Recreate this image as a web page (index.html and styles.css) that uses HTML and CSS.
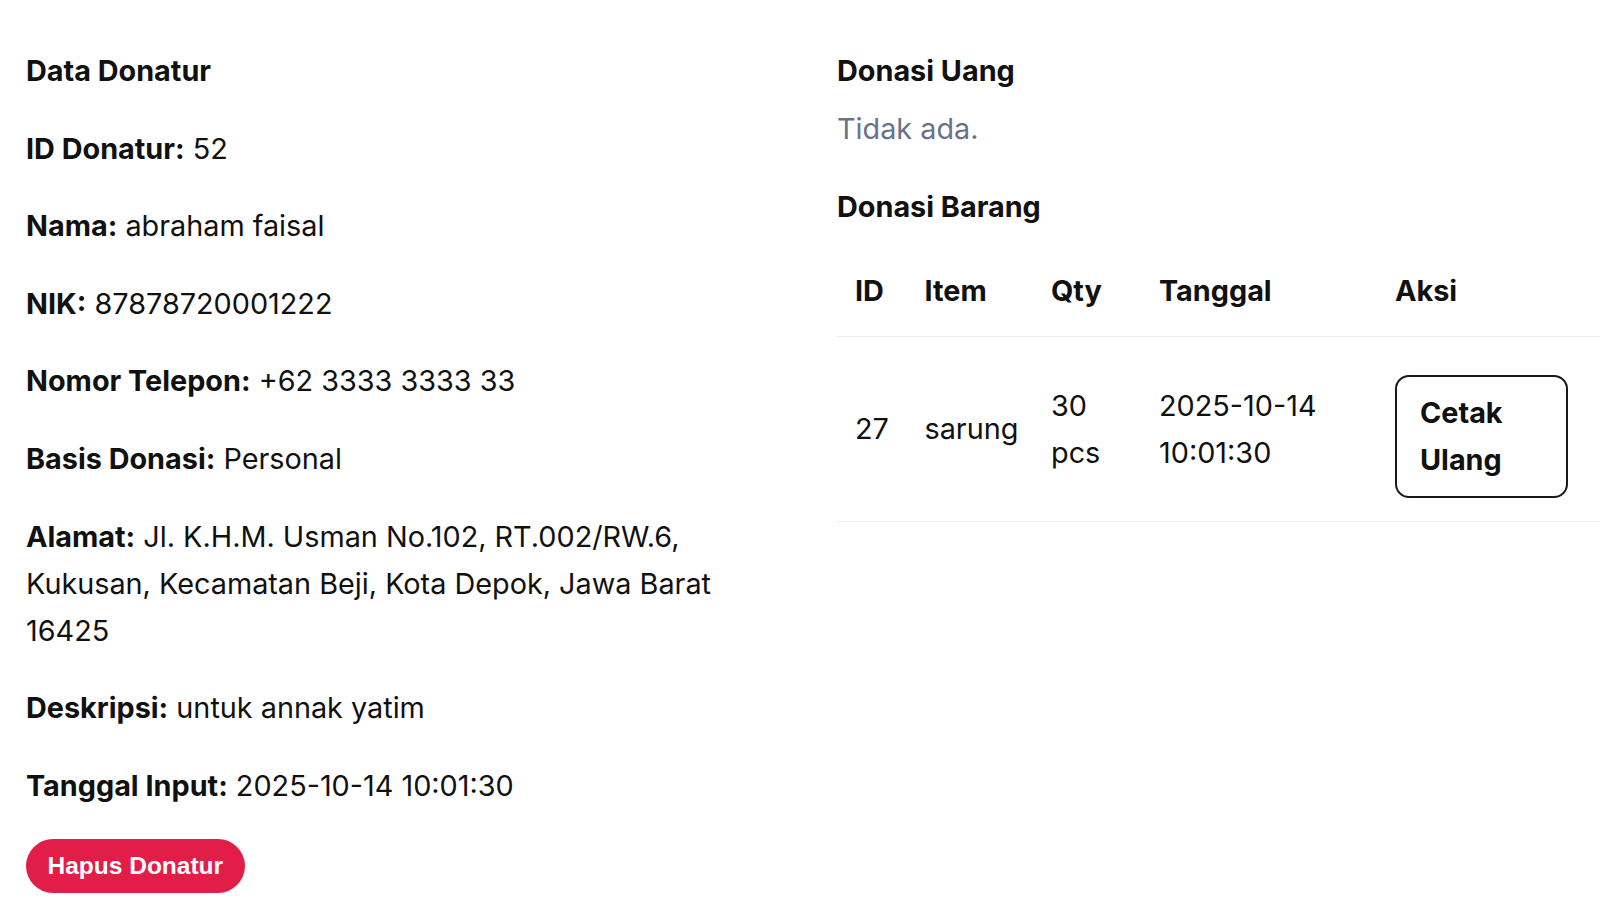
FILE: index.html
```html
<!DOCTYPE html>
<html lang="id">
<head>
<meta charset="utf-8">
<title>Detail Donatur</title>
<link rel="stylesheet" href="styles.css">
</head>
<body>
<div class="page">
  <section class="info">
    <h2 class="title">Data Donatur</h2>
    <p class="row"><b>ID Donatur:</b> 52</p>
    <p class="row"><b>Nama:</b> abraham faisal</p>
    <p class="row"><b>NIK:</b> 87878720001222</p>
    <p class="row"><b>Nomor Telepon:</b> +62 3333 3333 33</p>
    <p class="row"><b>Basis Donasi:</b> Personal</p>
    <p class="row"><b>Alamat:</b> Jl. K.H.M. Usman No.102, RT.002/RW.6, Kukusan, Kecamatan Beji, Kota Depok, Jawa Barat 16425</p>
    <p class="row"><b>Deskripsi:</b> untuk annak yatim</p>
    <p class="row"><b>Tanggal Input:</b> 2025-10-14 10:01:30</p>
    <form class="delete-form">
      <button type="button" class="btn-delete">Hapus Donatur</button>
    </form>
  </section>
  <section class="donations">
    <div class="money">
      <h3 class="title">Donasi Uang</h3>
      <p class="empty">Tidak ada.</p>
    </div>
    <div class="goods">
      <h3 class="title goods-title">Donasi Barang</h3>
      <table class="table">
        <colgroup>
          <col class="c-id"><col class="c-item"><col class="c-qty"><col class="c-date"><col class="c-act">
        </colgroup>
        <thead>
          <tr><th>ID</th><th>Item</th><th>Qty</th><th>Tanggal</th><th>Aksi</th></tr>
        </thead>
        <tbody>
          <tr>
            <td>27</td>
            <td>sarung</td>
            <td>30 pcs</td>
            <td>2025-10-14 10:01:30</td>
            <td><button type="button" class="btn-print">Cetak Ulang</button></td>
          </tr>
        </tbody>
      </table>
    </div>
  </section>
</div>
</body>
</html>
```
FILE: styles.css
```css
* { box-sizing: border-box; }

html, body {
  margin: 0;
  padding: 0;
  background: #ffffff;
}

body {
  font-family: Inter, "Noto Sans", "Liberation Sans", sans-serif;
  font-size: 28.8px;
  line-height: 47px;
  color: #111111;
}

.page {
  display: grid;
  grid-template-columns: 763px 763px;
  column-gap: 48px;
  padding: 47px 0 0 26px;
}

.title {
  margin: 0;
  font-size: 28.8px;
  line-height: 47px;
  font-weight: 700;
}

.info {
  display: flex;
  flex-direction: column;
  align-items: flex-start;
  gap: 30.6px;
}

.row {
  margin: 0;
}

.row b {
  font-weight: 700;
}

.delete-form {
  margin: 0;
}

.btn-delete {
  display: block;
  height: 54px;
  padding: 0 21.5px;
  border: none;
  border-radius: 999px;
  background: #e11d48;
  color: #ffffff;
  font-family: "Liberation Sans", Arial, sans-serif;
  font-size: 24.5px;
  font-weight: 700;
  line-height: 54px;
  cursor: pointer;
}

.donations {
  display: flex;
  flex-direction: column;
  gap: 31px;
}

.money .title {
  margin-bottom: 11.3px;
}

.empty {
  margin: 0;
  color: #6a7385;
}

.goods-title {
  margin-bottom: 14.3px;
}

.table {
  width: 763px;
  border-collapse: collapse;
  table-layout: fixed;
}

.c-id { width: 69.5px; }
.c-item { width: 126.5px; }
.c-qty { width: 108px; }
.c-date { width: 236px; }
.c-act { width: 223px; }

.table th,
.table td {
  padding: 22px 18px;
  text-align: left;
  vertical-align: middle;
  border-bottom: 1px solid #ebedf0;
}

.table th {
  font-weight: 700;
}

.table td {
  font-weight: 400;
}

.btn-print {
  display: block;
  width: 173px;
  margin: 16px 0 1px 0;
  padding: 12.5px 23px;
  border: 2px solid #1a1a1a;
  border-radius: 14px;
  background: #ffffff;
  color: #111111;
  font-family: inherit;
  font-size: 28.8px;
  line-height: 47px;
  font-weight: 700;
  text-align: left;
  cursor: pointer;
}
```
